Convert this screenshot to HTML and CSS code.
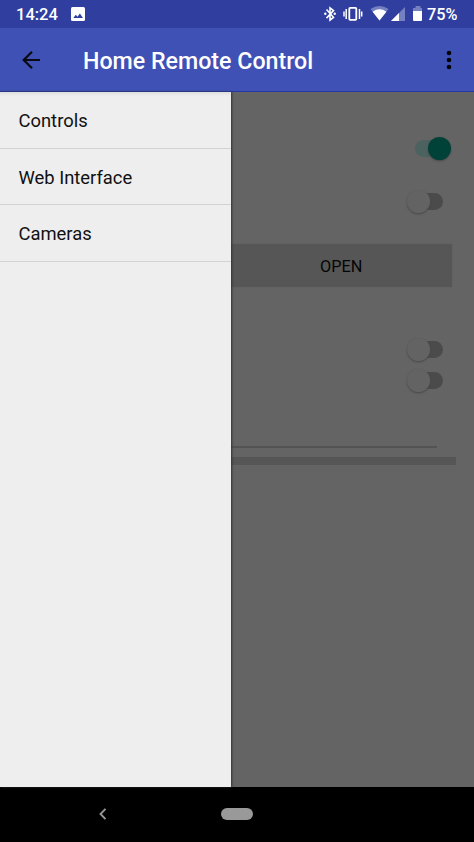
FILE: index.html
```html
<!DOCTYPE html>
<html lang="en">
<head>
<meta charset="utf-8">
<title>Home Remote Control</title>
<link rel="stylesheet" href="styles.css">
</head>
<body>
<div class="screen">
  <header class="status">
    <span class="clock">14:24</span>
    <svg class="photo" width="14" height="14" viewBox="0 0 14 14"><rect width="14" height="14" rx="1.5" fill="#fff"/><path d="M2.3 11 4.8 7.7 6.5 9.7 8.9 6.5 12 11z" fill="#303f9f"/></svg>
    <svg class="indicators" width="106" height="28" viewBox="0 0 106 28">
      <path d="M3.500 9.500 10.500 17.300 7 20V7.800l3.500 2.800-7 7.500" fill="none" stroke="#fff" stroke-width="1.600"/>
      <circle cx="2.300" cy="13.800" r="1.200" fill="#fff"/><circle cx="11.700" cy="13.800" r="1.200" fill="#fff"/>
      <rect x="26.300" y="7.900" width="7" height="12" rx=".8" fill="none" stroke="#fff" stroke-width="1.800"/>
      <path d="M23.200 9v10M21 11.500v5M36.500 9v10M38.700 11.500v5" stroke="#fff" stroke-width="1.500"/>
      <path d="M47.500 9Q56.500 3.200 65.500 9L56.500 20.500z" fill="#7580c0"/>
      <path d="M49.600 11.700Q56.500 6.800 63.400 11.700L56.500 20.500z" fill="#fff"/>
      <path d="M82 7v14H68z" fill="#7580c0"/><path d="M76 13v8h-8z" fill="#fff"/>
      <path d="M92.500 6h5v2h-5zM90 8h9v3h-9z" fill="#7580c0"/><path d="M90 11h9v9a1 1 0 0 1-1 1h-7a1 1 0 0 1-1-1z" fill="#fff"/>
    </svg>
    <span class="percent">75%</span>
  </header>
  <div class="appbar">
    <svg class="back" width="20" height="20" viewBox="0 0 20 20"><path d="M19 10H2.500M11 1.800 2.700 10l8.300 8.200" fill="none" stroke="#0a0a14" stroke-width="2.200"/></svg>
    <h1>Home Remote Control</h1>
    <svg class="more" width="6" height="20" viewBox="0 0 6 20" fill="#050505"><circle cx="3" cy="3" r="2.300"/><circle cx="3" cy="10" r="2.300"/><circle cx="3" cy="17" r="2.300"/></svg>
  </div>
  <main>
    <nav class="drawer">
      <a>Controls</a>
      <a>Web Interface</a>
      <a>Cameras</a>
    </nav>
    <section class="content">
      <div class="switch on"><i></i></div>
      <div class="switch second"><i></i></div>
      <div class="open">OPEN</div>
      <div class="switch third"><i></i></div>
      <div class="switch fourth"><i></i></div>
      <div class="line"></div>
      <div class="bar"></div>
    </section>
  </main>
  <footer>
    <svg class="navback" width="8" height="12" viewBox="0 0 8 12"><path d="M6.500 .8 1.500 6l5 5.200" fill="none" stroke="#999" stroke-width="1.900"/></svg>
    <div class="home"></div>
  </footer>
</div>
</body>
</html>
```
FILE: styles.css
```css
* { box-sizing: border-box; }
body { margin: 0; font-family: Roboto, sans-serif; }
.screen { width: 474px; height: 842px; display: flex; flex-direction: column; overflow: hidden; }
.status { height: 28px; background: #303f9f; color: #fff; display: flex; align-items: center; line-height: 28px; }
.clock { width: 55px; margin-left: 16px; padding-top: 1px; white-space: nowrap; font-size: 16.5px; font-weight: 500; }
.indicators { margin-left: 238px; flex: none; }
.percent { margin-left: -2px; padding-top: 1px; font-size: 16.3px; font-weight: 500; white-space: nowrap; }
.appbar { height: 64px; background: #3f51b5; display: flex; align-items: center; border-bottom: 1px solid #2338a5; }
.back { margin-left: 21px; }
h1 { margin: 3px 0 0 42px; width: 363px; color: #fff; font-size: 23.2px; font-weight: 500; line-height: 31px; white-space: nowrap; }
.more { flex: none; }
main { height: 695px; display: flex; background: #646464; }
.drawer { width: 230.5px; background: linear-gradient(#dedede, #eee 4px); box-shadow: 1px 0 2px #333; z-index: 1; }
.drawer a { display: block; height: 56.7px; padding-left: 18.5px; border-bottom: 1.5px solid #d3d3d3; font-size: 18.4px; line-height: 58px; color: #111; }
.content { width: 243.5px; display: flex; flex-direction: column; padding-top: 45px; }
.switch { flex: none; position: relative; width: 37px; height: 23px; display: flex; align-items: center; margin-left: 176px; }
.switch::before { content: ""; width: 30px; height: 17px; border-radius: 9px; background: #4b4b4b; margin-left: 6px; }
.switch i { position: absolute; left: 0; top: 0; width: 23px; height: 23px; border-radius: 50%; background: #636363; box-shadow: 0 1px 2px #484848; }
.on { margin-left: 184.5px; }
.on::before { margin-left: 0; background: #4c625f; }
.on i { left: 13px; background: #004138; }
.second { margin-top: 30px; }
.open { width: 221.5px; height: 43px; margin-top: 31px; background: #565656; box-shadow: 0 0 1px #515151; border-radius: 0 1px 1px 0; font-size: 16.3px; line-height: 45px; text-align: center; color: #050505; }
.third { margin-top: 51px; }
.fourth { margin-top: 8px; }
.line { height: 2px; width: 206.5px; margin-top: 54px; background: #535353; }
.bar { height: 8px; width: 225.5px; margin-top: 9px; background: #565656; }
footer { height: 55px; background: #000; display: flex; align-items: center; }
.navback { margin-left: 98.5px; margin-top: -1px; }
.home { width: 32px; height: 12px; border-radius: 6px; background: #999; margin: -1px 0 0 114.5px; }
```
